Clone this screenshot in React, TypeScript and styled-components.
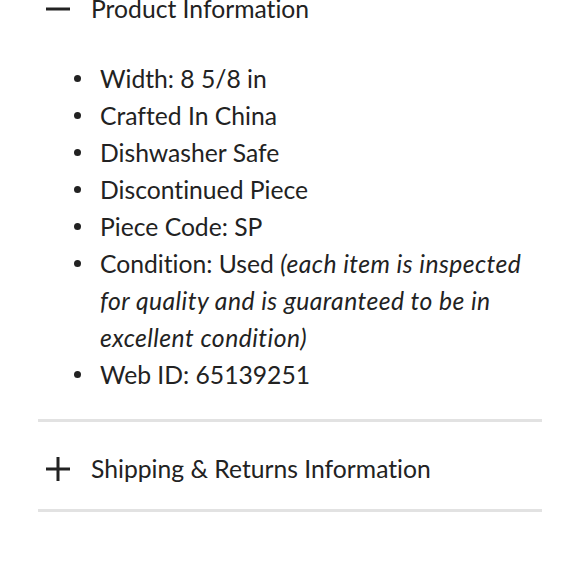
import React from 'react';
import styled, { createGlobalStyle } from 'styled-components';

const GlobalStyle = createGlobalStyle`
  body {
    margin: 0;
    background: #fff;
    font-family: Lato, "Open Sans", sans-serif;
    font-variant-ligatures: none;
    color: #222;
  }
`;

const Page = styled.div`
  padding: 0 38px;
  margin-top: -20px;
`;

const Section = styled.section`
  border-bottom: 3px solid #e2e2e2;
`;

const Header = styled.div<{ $open?: boolean }>`
  display: flex;
  align-items: center;
  gap: 21px;
  padding: ${p => (p.$open ? '14px 0 14px 8px' : '32px 0 25px 8px')};
  font-size: 24.7px;
  line-height: 30px;
`;

const Icon = styled.svg`
  width: 24px;
  height: 24px;
  flex-shrink: 0;
`;

const List = styled.ul`
  list-style: none;
  margin: 0;
  padding: 22px 10px 26px 62px;
  font-size: 24.7px;
  line-height: 37px;
`;

const Item = styled.li`
  position: relative;
  &::before {
    content: '';
    position: absolute;
    left: -26px;
    top: 15px;
    width: 7px;
    height: 7px;
    border-radius: 50%;
    background: #222;
  }
`;

const Note = styled.em`
  font-style: italic;
  letter-spacing: 0.45px;
`;

const items: React.ReactNode[] = [
  'Width: 8 5/8 in',
  'Crafted In China',
  'Dishwasher Safe',
  'Discontinued Piece',
  'Piece Code: SP',
  <>
    Condition: Used{' '}
    <Note>(each item is inspected for quality and is guaranteed to be in excellent condition)</Note>
  </>,
  'Web ID: 65139251',
];

export default function App() {
  return (
    <>
      <GlobalStyle />
      <Page>
        <Section>
          <Header $open>
            <Icon viewBox="0 0 24 24">
              <path d="M0 12h24" stroke="#222" strokeWidth="3" />
            </Icon>
            Product Information
          </Header>
          <List>
            {items.map((it, i) => (
              <Item key={i}>{it}</Item>
            ))}
          </List>
        </Section>
        <Section>
          <Header>
            <Icon viewBox="0 0 24 24">
              <path d="M0 12h24M12 0v24" stroke="#222" strokeWidth="3" />
            </Icon>
            Shipping &amp; Returns Information
          </Header>
        </Section>
      </Page>
    </>
  );
}
